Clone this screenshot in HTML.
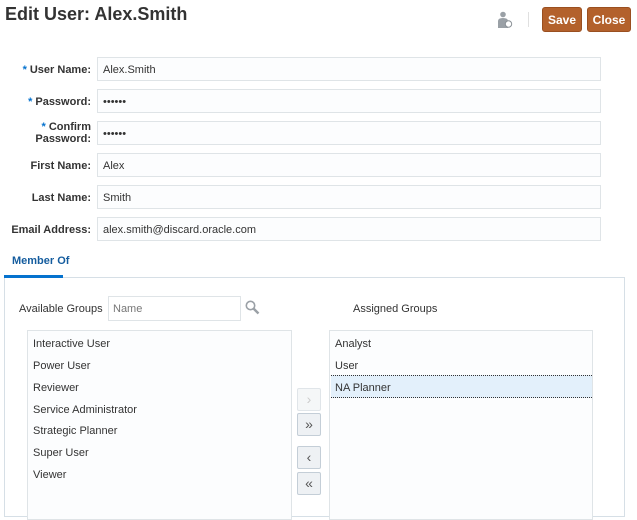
<!DOCTYPE html>
<html><head><style>
body{margin:0;width:637px;height:506px;overflow:hidden;background:#fff;font-family:"Liberation Sans",Arial,sans-serif;font-size:11px;color:#333;position:relative}
.a{position:absolute}
h1{position:absolute;left:5px;top:4px;margin:0;font-size:18px;font-weight:bold;color:#333}
.btn{position:absolute;top:7px;height:25px;background:#b3612c;border:1px solid #9a4f20;border-radius:3px;color:#fff;font-weight:bold;font-size:12px;line-height:25px;text-align:center;box-sizing:border-box}
.lbl{position:absolute;right:546px;text-align:right;font-weight:bold;color:#333;font-size:11px;line-height:12px}
.lbl i{color:#0572ce;font-style:normal;margin-right:3px}
.in{position:absolute;left:97px;width:504px;height:24px;border:1px solid #dfe4e7;background:#fcfdfe;box-sizing:border-box;padding-left:5px;line-height:24px;font-size:11px;color:#333}
.li{position:absolute;left:5px;font-size:11px}
.ab{position:absolute;left:297px;width:24px;height:23px;border:1px solid #c4ced7;background:#eef1f4;border-radius:2px;box-sizing:border-box;text-align:center;line-height:20px;font-size:14px;color:#555}
</style></head><body>
<h1>Edit User: Alex.Smith</h1>
<svg class="a" style="left:497px;top:11px" width="16" height="18" viewBox="0 0 16 18"><circle cx="6" cy="3.5" r="2.8" fill="#9aa0a6"/><path d="M1 17V10q0-3 5-3t5 3v7z" fill="#9aa0a6"/><circle cx="11.5" cy="13" r="3.2" fill="#fff" stroke="#8a9096" stroke-width="1"/></svg>
<div class="a" style="left:528px;top:12px;width:1px;height:15px;background:#e0e0e0"></div>
<div class="btn" style="left:542px;width:40px">Save</div>
<div class="btn" style="left:587px;width:44px">Close</div>

<div class="lbl" style="top:64px"><i>*</i>User Name:</div>
<div class="in" style="top:57px">Alex.Smith</div>
<div class="lbl" style="top:96px"><i>*</i>Password:</div>
<div class="in" style="top:89px">••••••</div>
<div class="lbl" style="top:121px"><i>*</i>Confirm<br>Password:</div>
<div class="in" style="top:121px">••••••</div>
<div class="lbl" style="top:160px">First Name:</div>
<div class="in" style="top:153px">Alex</div>
<div class="lbl" style="top:192px">Last Name:</div>
<div class="in" style="top:185px">Smith</div>
<div class="lbl" style="top:224px">Email Address:</div>
<div class="in" style="top:217px">alex.smith@discard.oracle.com</div>

<div class="a" style="left:12px;top:255px;font-weight:bold;color:#145c9e;font-size:11px">Member Of</div>
<div class="a" style="left:4px;top:277px;width:621px;height:240px;border:1px solid #d6dfe6;box-sizing:border-box"></div>
<div class="a" style="left:4px;top:275px;width:59px;height:3px;background:#0572ce"></div>

<div class="a" style="left:19px;top:303px">Available Groups</div>
<div class="a" style="left:108px;top:296px;width:133px;height:25px;border:1px solid #dfe4e7;box-sizing:border-box;padding-left:4px;line-height:25px;color:#777;background:#fff">Name</div>
<svg class="a" style="left:245px;top:300px" width="15" height="15" viewBox="0 0 15 15"><circle cx="5.5" cy="5.5" r="4.2" fill="none" stroke="#9aa0a6" stroke-width="1.6"/><path d="M8.5 8.5L13.5 13.5" stroke="#9aa0a6" stroke-width="2.4"/></svg>
<div class="a" style="left:353px;top:303px">Assigned Groups</div>

<div class="a" style="left:27px;top:330px;width:265px;height:190px;border:1px solid #dfe4e7;background:#fcfdfe;box-sizing:border-box">
<div class="li" style="top:7px">Interactive User</div>
<div class="li" style="top:29px">Power User</div>
<div class="li" style="top:51px">Reviewer</div>
<div class="li" style="top:73px">Service Administrator</div>
<div class="li" style="top:94px">Strategic Planner</div>
<div class="li" style="top:116px">Super User</div>
<div class="li" style="top:138px">Viewer</div>
</div>
<div class="a" style="left:329px;top:330px;width:264px;height:190px;border:1px solid #dfe4e7;background:#fcfdfe;box-sizing:border-box">
<div class="a" style="left:1px;top:44px;width:261px;height:23px;background:#e3f0fb;border-top:1px dotted #333;border-bottom:1px dotted #333;box-sizing:border-box"></div>
<div class="li" style="top:7px">Analyst</div>
<div class="li" style="top:29px">User</div>
<div class="li" style="top:51px">NA Planner</div>
</div>

<div class="ab" style="top:388px;color:#ccc;background:#f5f7f8;border-color:#e0e5e9">&#8250;</div>
<div class="ab" style="top:413px">&#187;</div>
<div class="ab" style="top:446px">&#8249;</div>
<div class="ab" style="top:472px">&#171;</div>
</body></html>
